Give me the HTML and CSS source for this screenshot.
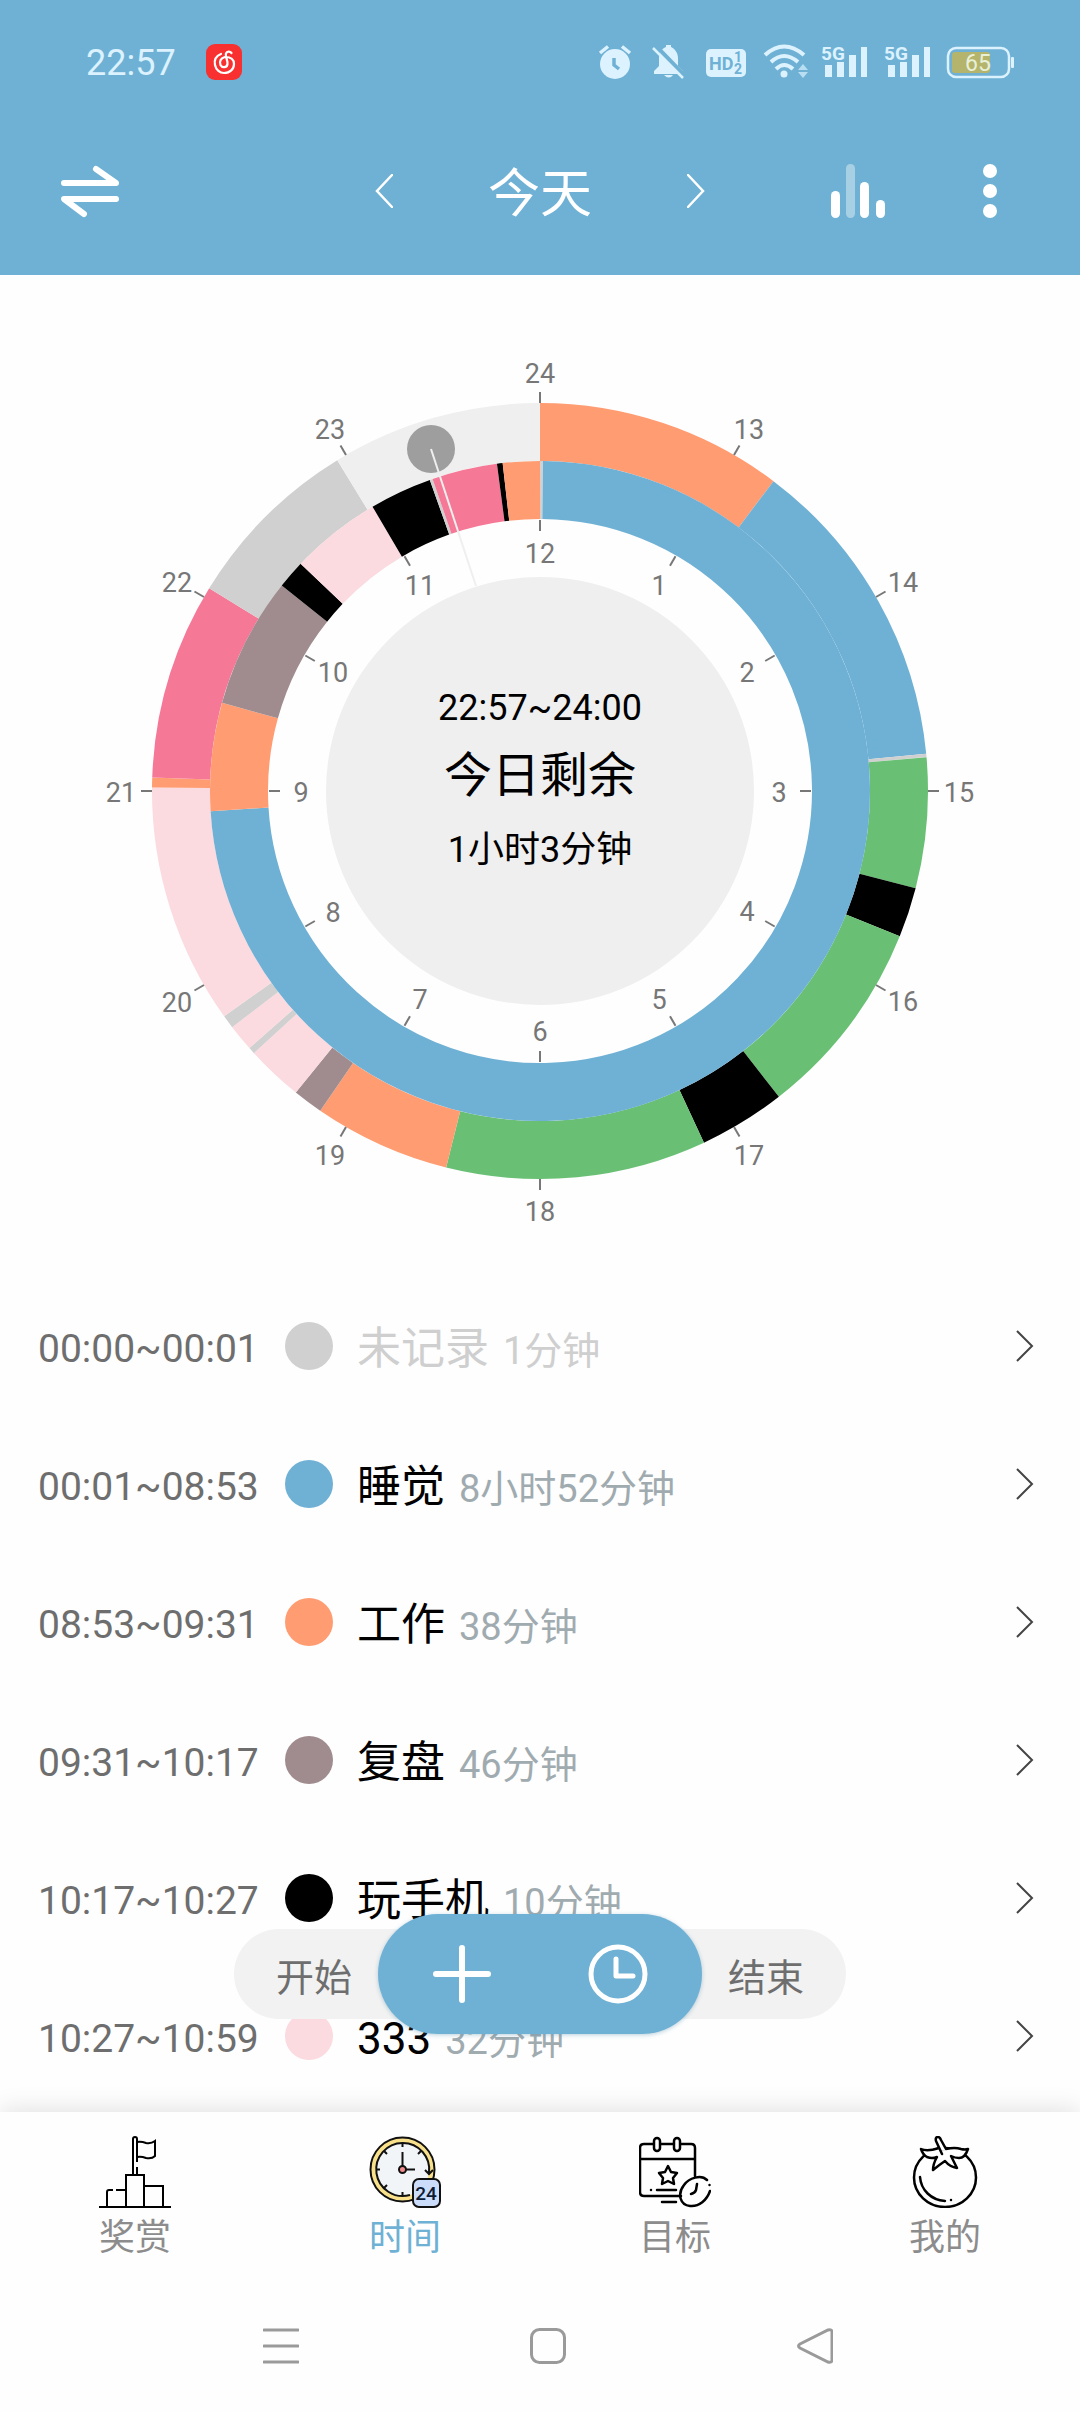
FILE: index.html
```html
<!DOCTYPE html>
<html lang="zh-CN">
<head>
<meta charset="utf-8">
<meta name="viewport" content="width=device-width, initial-scale=1">
<title>时间</title>
<link rel="stylesheet" href="styles.css">
</head>
<body>
<div class="app">
  <header class="header">
    <div class="status">
      <span class="status-time">22:57</span>
      <svg class="music" viewBox="0 0 36 36" width="36" height="36" aria-hidden="true">
        <rect width="36" height="36" rx="9" fill="#f8302f"/>
        <path d="M15 10C10 12 8 16 9 21C10 26 14 29 18 29C24 29 28 25 28 20C28 15 24 13 19 13C15 14 13 17 14.500 21C16 24 21 24 21.500 20C22 17 19 12 20 9.500C21 7 24 7 25.500 9" fill="none" stroke="#fff" stroke-width="2.200" stroke-linecap="round"/>
      </svg>
      <div class="status-icons">
        <svg viewBox="0 0 41 36" width="41" height="36" aria-hidden="true">
          <circle cx="16" cy="20" r="15" fill="#dcf2ff"/>
          <path d="M1 9L9 2.500M31 9L23 2.500" stroke="#dcf2ff" stroke-width="3.500"/>
          <path d="M15 14V21L20 25" fill="none" stroke="#6fb1d4" stroke-width="3.500"/>
        </svg>
        <svg viewBox="0 0 40 36" width="40" height="36" aria-hidden="true">
          <path d="M2 30V27L7 22V14C7 8 11 4 14 3V1H19V3C23 5 26 9 26 14V22L31 27V30Z" fill="#dcf2ff"/>
          <path d="M12 31H21Q17 36 12 31Z" fill="#dcf2ff"/>
          <path d="M3 1L34 33" stroke="#6fb1d4" stroke-width="4"/>
          <path d="M1 4L31 34" stroke="#dcf2ff" stroke-width="2.500"/>
        </svg>
        <svg viewBox="0 0 48 36" width="48" height="36" aria-hidden="true">
          <rect x="2" y="5" width="40" height="28" rx="5" fill="#dcf2ff"/>
          <g fill="#6fb1d4" font-family="Roboto, sans-serif" font-weight="700">
            <text x="5" y="26" font-size="18">HD</text>
            <text x="30" y="18" font-size="14">1</text>
            <text x="30" y="30" font-size="14">2</text>
          </g>
        </svg>
        <svg viewBox="0 0 45 36" width="45" height="36" aria-hidden="true">
          <g fill="none" stroke="#dcf2ff" stroke-width="4">
            <path d="M1 11Q20 -6 40 11"/><path d="M7 18Q20 6 34 18"/><path d="M12 25Q20 17 29 25"/>
          </g>
          <circle cx="20" cy="30" r="3.500" fill="#dcf2ff"/>
          <path d="M39 20L44 26H34ZM39 34L44 28H34Z" fill="#b9def2"/>
        </svg>
        <svg viewBox="0 0 51 36" width="51" height="36" aria-hidden="true">
          <text x="0" y="16" font-family="Roboto, sans-serif" font-size="19" font-weight="700" fill="#dcf2ff">5G</text>
          <path d="M4 21h7v12h-7zM16 18h7v15h-7zM28 11h7v22h-7zM40 3h6v30h-6z" fill="#dcf2ff"/>
        </svg>
        <svg viewBox="0 0 51 36" width="51" height="36" aria-hidden="true">
          <text x="0" y="16" font-family="Roboto, sans-serif" font-size="19" font-weight="700" fill="#dcf2ff">5G</text>
          <path d="M4 21h7v12h-7zM16 18h7v15h-7zM28 11h7v22h-7zM40 3h6v30h-6z" fill="#dcf2ff"/>
        </svg>
        <svg viewBox="0 0 67 36" width="67" height="36" aria-hidden="true">
          <rect x="1" y="4" width="61" height="29" rx="8" fill="none" stroke="#dcf2ff" stroke-width="2.500"/>
          <rect x="5" y="8" width="38" height="21" rx="3" fill="#b5b46c"/>
          <rect x="64" y="13" width="3" height="11" rx="1" fill="#dcf2ff"/>
          <text x="31" y="27" text-anchor="middle" font-family="Roboto, sans-serif" font-size="23" fill="#e8f0d8">65</text>
        </svg>
      </div>
    </div>
    <nav class="toolbar">
      <button class="tool" aria-label="切换">
        <svg viewBox="0 0 72 56" width="72" height="56"><g fill="none" stroke="#fff" stroke-width="6" stroke-linecap="round" stroke-linejoin="round"><path d="M10 20H62L42 6"/><path d="M62 36H10L30 51"/></g></svg>
      </button>
      <div class="day">
        <button class="step" aria-label="前一天"><svg viewBox="0 0 18 34" width="18" height="34"><path d="M17 1L2 17L17 33" fill="none" stroke="#fff" stroke-width="2.500" stroke-linecap="round"/></svg></button>
        <h1 class="day-title">今天</h1>
        <button class="step" aria-label="后一天"><svg viewBox="0 0 18 34" width="18" height="34"><path d="M1 1L16 17L1 33" fill="none" stroke="#fff" stroke-width="2.500" stroke-linecap="round"/></svg></button>
      </div>
      <div class="tools">
        <button class="tool" aria-label="统计"><svg viewBox="0 0 54 54" width="54" height="54" fill="#fff"><rect y="27" width="9" height="27" rx="4.500"/><rect x="15" width="9" height="54" rx="4.500" opacity=".4"/><rect x="29" y="18" width="9" height="36" rx="4.500"/><rect x="45" y="36" width="9" height="18" rx="4.500"/></svg></button>
        <button class="tool" aria-label="更多"><svg viewBox="0 0 14 54" width="14" height="54" fill="#fff"><circle cx="7" cy="7" r="7"/><circle cx="7" cy="27" r="7"/><circle cx="7" cy="47" r="7"/></svg></button>
      </div>
    </nav>
  </header>

  <main class="content">
    <section class="day-dial" aria-label="今日时间盘">
      <!-- Origin at the dial centre. Both rings count 720 minutes per turn, clockwise from the top. -->
      <svg class="dial" viewBox="-540 -516 1080 1002">
        <circle r="214" fill="#efefef"/>
        <g class="ring" id="pm"></g>
        <g class="ring" id="am"></g>
        <g id="ticks" stroke="#777" stroke-width="2"></g>
        <circle cx="-109" cy="-342" r="24" fill="#9e9e9e"/>
        <path d="M-109 -342L-64 -205" stroke="#efefef" stroke-width="2"/>
        <g id="hours" class="hours"></g>
        <g class="summary">
          <text y="-71">22:57~24:00</text>
          <text y="1" class="summary-title">今日剩余</text>
          <text y="71">1小时3分钟</text>
        </g>
      </svg>
    </section>

    <ul class="records">
      <li><a class="record is-empty" href="#r1"><span class="time">00:00~00:01</span><i class="dot none"></i><span class="info"><b class="name">未记录</b><span class="length">1分钟</span></span><svg class="go" viewBox="0 0 18 32" width="18" height="32"><path d="M1 1L16 16L1 31"/></svg></a></li>
      <li><a class="record" href="#r2"><span class="time">00:01~08:53</span><i class="dot sleep"></i><span class="info"><b class="name">睡觉</b><span class="length">8小时52分钟</span></span><svg class="go" viewBox="0 0 18 32" width="18" height="32"><path d="M1 1L16 16L1 31"/></svg></a></li>
      <li><a class="record" href="#r3"><span class="time">08:53~09:31</span><i class="dot work"></i><span class="info"><b class="name">工作</b><span class="length">38分钟</span></span><svg class="go" viewBox="0 0 18 32" width="18" height="32"><path d="M1 1L16 16L1 31"/></svg></a></li>
      <li><a class="record" href="#r4"><span class="time">09:31~10:17</span><i class="dot review"></i><span class="info"><b class="name">复盘</b><span class="length">46分钟</span></span><svg class="go" viewBox="0 0 18 32" width="18" height="32"><path d="M1 1L16 16L1 31"/></svg></a></li>
      <li><a class="record" href="#r5"><span class="time">10:17~10:27</span><i class="dot phone"></i><span class="info"><b class="name">玩手机</b><span class="length">10分钟</span></span><svg class="go" viewBox="0 0 18 32" width="18" height="32"><path d="M1 1L16 16L1 31"/></svg></a></li>
      <li><a class="record" href="#r6"><span class="time">10:27~10:59</span><i class="dot other"></i><span class="info"><b class="name">333</b><span class="length">32分钟</span></span><svg class="go" viewBox="0 0 18 32" width="18" height="32"><path d="M1 1L16 16L1 31"/></svg></a></li>
    </ul>
  </main>

  <footer class="bottom">
    <div class="recorder">
      <button class="side">开始</button>
      <div class="core">
        <button class="core-button" aria-label="添加"><svg viewBox="0 0 60 60" width="60" height="60"><path d="M30 4V56M4 30H56" stroke="#fff" stroke-width="6" stroke-linecap="round"/></svg></button>
        <button class="core-button" aria-label="计时"><svg viewBox="0 0 60 60" width="60" height="60"><g fill="none" stroke="#fff" stroke-linecap="round" stroke-linejoin="round"><circle cx="30" cy="30" r="27" stroke-width="5"/><path d="M28 15V32H45" stroke-width="5"/></g></svg></button>
      </div>
      <button class="side">结束</button>
    </div>
    <nav class="tabs">
      <a class="tab" href="#reward">
        <svg viewBox="0 0 72 72" width="72" height="72"><g fill="none" stroke="#000" stroke-width="2"><path d="M0 71H72M27 71V39H45V71M45 50H64V71M8 71V56Q8 54 10 54H14M17 54H27M34 39V3Q34 1 36 1Q38 1 38 3V26M38 31V39"/><path d="M38 6Q42 5 47 7Q52 8 56 5V20Q53 23 47 22Q42 20 38 21"/></g></svg>
        <span>奖赏</span>
      </a>
      <a class="tab is-active" href="#time" aria-current="page">
        <svg viewBox="0 0 72 72" width="72" height="72">
          <circle cx="33.500" cy="33.500" r="32" fill="#f9e08a" stroke="#111" stroke-width="2"/>
          <circle cx="33.500" cy="33.500" r="26.500" fill="#f2f5f7"/>
          <path d="M41 59A26.500 26.500 0 1 1 60 37M56 34L60 38L64 34" fill="none" stroke="#111" stroke-width="2"/>
          <path d="M33.500 7V11M7 33.500H11M33.500 56V60M15 15L18 18M52 15L49 18M15 52L18 49M33.500 30V16M37 33.500H46" stroke="#111" stroke-width="2"/>
          <circle cx="33.500" cy="33.500" r="3.500" fill="#f28b8b" stroke="#111" stroke-width="2"/>
          <rect x="44" y="43" width="27" height="28" rx="6" fill="#cbdcfb" stroke="#111" stroke-width="2"/>
          <text x="57" y="64" text-anchor="middle" font-family="Roboto, sans-serif" font-size="19" font-weight="500" fill="#0c1a33">24</text>
        </svg>
        <span>时间</span>
      </a>
      <a class="tab" href="#goal">
        <svg viewBox="0 0 72 72" width="72" height="72"><g fill="none" stroke="#000" stroke-width="2.500" stroke-linecap="round" stroke-linejoin="round"><path d="M42 60H5Q1 60 1 56V12Q1 8 5 8H14M22 8H34M42 8H52Q56 8 56 12V40M1 23H56"/><rect x="15" y="2" width="6" height="13" rx="3"/><rect x="35" y="2" width="6" height="13" rx="3"/><path d="M29 30L32 36L38 37L34 42L35 48L29 45L23 48L24 42L20 37L26 36ZM12 54V54M18 54H37M23 66H37"/><path d="M68 44C62 38 50 42 45 49C38 58 41 69 51 70C60 71 68 64 71 55M70.500 49V49M58 48L57 54Q56 57 52 58"/></g></svg>
        <span>目标</span>
      </a>
      <a class="tab" href="#mine">
        <svg viewBox="0 0 72 72" width="72" height="72"><g fill="none" stroke="#000" stroke-width="2.500" stroke-linecap="round" stroke-linejoin="round"><ellipse cx="36" cy="41.500" rx="31" ry="29.500"/><path d="M11 41C12 54 22 64 36 65M42 64V64"/><path fill="#fff" d="M12 13Q18 16 30 12L33 13H37Q46 11 52 13Q56 14 59 13Q56 22 50 22Q46 22 42 20Q45 26 48 32Q41 31 36 25Q30 29 24 34Q24 28 28 21Q23 23 18 21Q14 19 12 13Z"/><path fill="#fff" stroke="none" d="M30 14L27 5L32 4L38 15Z"/><path d="M33 18L27 5Q26 1 29 1Q31 1 32 4L37 13"/></g></svg>
        <span>我的</span>
      </a>
    </nav>
    <div class="system">
      <button aria-label="最近任务"><svg viewBox="0 0 36 36" width="36" height="36"><path d="M1 2H35M1 18H35M1 34H35"/></svg></button>
      <button aria-label="主页"><svg viewBox="0 0 36 36" width="36" height="36"><rect x="1.500" y="1.500" width="33" height="33" rx="8"/></svg></button>
      <button aria-label="返回"><svg viewBox="0 0 36 36" width="36" height="36"><path d="M31 2Q35 1 35 4V32Q35 35 31 34L3 20Q0 18 3 16Z"/></svg></button>
    </div>
  </footer>
</div>
<script src="dial.js"></script>
</body>
</html>
```
FILE: styles.css
```css
:root {
  --blue: #6fb1d4;
  --orange: #ff9c72;
  --pale-pink: #fbdae0;
  --mauve: #a08c8e;
  --gray: #d0d0d0;
}

* { box-sizing: border-box; }

body {
  margin: 0;
  background: #fefefe;
  color: #000;
  font-family: Roboto, "Noto Sans CJK SC", sans-serif;
}

button {
  display: flex;
  align-items: center;
  justify-content: center;
  padding: 0;
  border: 0;
  background: none;
  color: inherit;
  font: inherit;
  cursor: pointer;
}

a { color: inherit; text-decoration: none; }
svg { display: block; }

.app {
  display: flex;
  flex-direction: column;
  height: 100vh;
}

/* Header */
.header { background: var(--blue); color: #fff; }

.status {
  display: flex;
  align-items: center;
  gap: 30px;
  height: 107px;
  padding: 17px 66px 0 86px;
}

.status-time { padding-top: 2px; color: #dcf2ff; font-size: 36px; }
.status-icons { display: flex; gap: 12px; margin-left: auto; }
.status-icons svg { overflow: visible; }

.toolbar {
  display: grid;
  grid-template-columns: 1fr auto 1fr;
  align-items: center;
  height: 168px;
  padding: 0 54px;
}

.tool { width: 72px; height: 72px; }

.day {
  display: flex;
  align-items: center;
  justify-content: space-between;
  width: 372px;
}

.step { width: 60px; height: 72px; }
.day-title { margin: 0; padding-top: 8px; font-size: 52px; font-weight: 400; line-height: 72px; }
.tools { display: flex; gap: 60px; justify-self: end; }

/* Dial */
.content { flex: 1; min-height: 0; overflow: hidden; }
.dial { width: 100%; max-width: 1080px; margin: 0 auto; }
.ring { fill: none; stroke-width: 58px; transform: rotate(-90deg); }
.dial text { text-anchor: middle; }
.hours { fill: #777; font-size: 27px; }
.summary { font-size: 36px; }
.summary-title { font-size: 48px; }

/* Records */
.records { margin: 0; padding: 0; list-style: none; }

.record {
  display: flex;
  align-items: center;
  gap: 24px;
  height: 138px;
  padding: 0 46px 0 38px;
}

.time { width: 223px; padding-top: 6px; color: #6e6e6e; font-size: 39px; white-space: nowrap; }
.dot { flex: none; width: 48px; height: 48px; border-radius: 50%; }
.info { display: flex; flex: 1; align-items: baseline; gap: 14px; padding-top: 6px; white-space: nowrap; }
.name { font-size: 44px; font-weight: 400; line-height: 64px; }
.length { color: #a0abb0; font-size: 38px; line-height: 56px; }
.is-empty .info, .is-empty .length { color: #cfcfcf; }
.go { fill: none; stroke: #444; stroke-width: 2px; }

.none { background: var(--gray); }
.sleep { background: var(--blue); }
.work { background: var(--orange); }
.review { background: var(--mauve); }
.phone { background: #000; }
.other { background: var(--pale-pink); }

/* Bottom */
.bottom {
  position: relative;
  background: #fefefe;
  box-shadow: 0 -2px 24px rgba(0, 0, 0, .12);
}

.recorder {
  position: absolute;
  bottom: 100%;
  left: 50%;
  display: flex;
  align-items: center;
  width: 612px;
  height: 90px;
  margin-bottom: 93px;
  padding: 0 16px;
  border-radius: 45px;
  background: #f2f2f2;
  transform: translateX(-50%);
}

.side { flex: 1; height: 90px; color: #6e6e6e; font-size: 38px; }

.core {
  display: flex;
  justify-content: center;
  width: 324px;
  height: 120px;
  border-radius: 60px;
  background: var(--blue);
  box-shadow: 0 1px 4px rgba(80, 140, 170, .4);
}

.core-button { width: 156px; height: 120px; }

.tabs { display: grid; grid-template-columns: repeat(4, 1fr); padding: 24px 0 20px; }

.tab {
  display: flex;
  flex-direction: column;
  align-items: center;
  gap: 8px;
  color: #8c8c8c;
  font-size: 36px;
  line-height: 44px;
}

.tab.is-active { color: var(--blue); }

.system {
  display: flex;
  align-items: center;
  justify-content: center;
  gap: 195px;
  height: 132px;
  padding-left: 15px;
}

.system button { width: 72px; height: 72px; }
.system svg { fill: none; stroke: #9a9a9a; stroke-width: 3px; stroke-linecap: round; }
```
FILE: dial.js
```js
const NS = 'http://www.w3.org/2000/svg';
const C = {
  none: '#d0d0d0', sleep: '#6fb1d4', work: '#ff9c72', study: '#69c074',
  pink: '#f67897', pale: '#fbdae0', review: '#a08c8e', phone: '#000', left: '#efefef'
};

// [end minute, activity]; each entry starts where the previous one ended.
const am = [[1, 'none'], [533, 'sleep'], [571, 'work'], [617, 'review'], [627, 'phone'],
  [659, 'pale'], [681, 'phone'], [682, 'none'], [705, 'pink'], [707, 'phone'], [720, 'work']];
const pm = [[74, 'work'], [169, 'sleep'], [170, 'none'], [209, 'study'], [224, 'phone'],
  [284, 'study'], [310, 'phone'], [388, 'study'], [429, 'work'], [438, 'review'],
  [455, 'pale'], [457, 'none'], [465, 'pale'], [469, 'none'], [541, 'pale'],
  [544, 'work'], [603, 'pink'], [657, 'none'], [720, 'left']];

function add(parent, name, attrs, text) {
  const el = document.createElementNS(NS, name);
  for (const key in attrs) el.setAttribute(key, attrs[key]);
  if (text) el.textContent = text;
  document.getElementById(parent).appendChild(el);
}

function point(radius, minute) {
  const a = minute / 720 * 2 * Math.PI;
  return [radius * Math.sin(a), -radius * Math.cos(a)];
}

function ring(id, radius, parts) {
  let start = 0;
  for (const [end, kind] of parts) {
    const [x1, y1] = point(radius, start + 180);
    const [x2, y2] = point(radius, end + 180);
    const large = end - start > 360 ? 1 : 0;
    add(id, 'path', { d: `M${x1} ${y1}A${radius} ${radius} 0 ${large} 1 ${x2} ${y2}`, stroke: C[kind] });
    start = end;
  }
}

ring('pm', 359, pm);
ring('am', 301, am);

for (let h = 1; h <= 12; h++) {
  for (const [from, to, at, label] of [[388, 399, 419, h + 12], [271, 260, 239, h]]) {
    const [x1, y1] = point(from, h * 60);
    const [x2, y2] = point(to, h * 60);
    const [x, y] = point(at, h * 60);
    add('ticks', 'path', { d: `M${x1} ${y1}L${x2} ${y2}` });
    add('hours', 'text', { x: Math.round(x), y: Math.round(y) + 11 }, String(label));
  }
}
```
